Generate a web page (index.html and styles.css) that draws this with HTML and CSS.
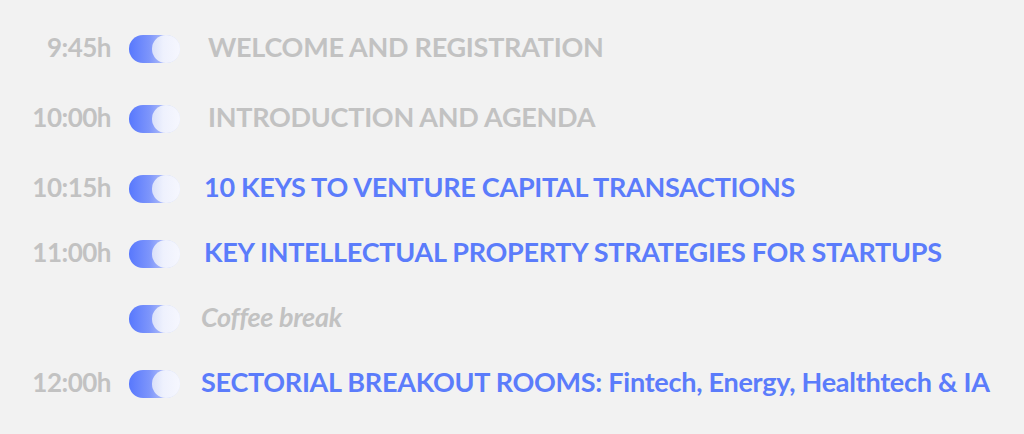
FILE: index.html
```html
<!DOCTYPE html>
<html>
<head>
<meta charset="utf-8">
<link rel="stylesheet" href="styles.css">
</head>
<body>
<div class="agenda">
  <div class="row row-a">
    <div class="time">9:45h</div>
    <div class="toggle"><span class="knob"></span></div>
    <div class="title muted gap-l">WELCOME AND REGISTRATION</div>
  </div>
  <div class="row row-a">
    <div class="time">10:00h</div>
    <div class="toggle"><span class="knob"></span></div>
    <div class="title muted gap-l">INTRODUCTION AND AGENDA</div>
  </div>
  <div class="row row-b">
    <div class="time">10:15h</div>
    <div class="toggle"><span class="knob"></span></div>
    <div class="title accent gap-m">10 KEYS TO VENTURE CAPITAL TRANSACTIONS</div>
  </div>
  <div class="row row-b">
    <div class="time">11:00h</div>
    <div class="toggle"><span class="knob"></span></div>
    <div class="title accent gap-m">KEY INTELLECTUAL PROPERTY STRATEGIES FOR STARTUPS</div>
  </div>
  <div class="row row-b">
    <div class="time"></div>
    <div class="toggle"><span class="knob"></span></div>
    <div class="title muted italic gap-s">Coffee break</div>
  </div>
  <div class="row">
    <div class="time">12:00h</div>
    <div class="toggle"><span class="knob"></span></div>
    <div class="title accent gap-s">SECTORIAL BREAKOUT ROOMS: Fintech, Energy, Healthtech &amp; IA</div>
  </div>
</div>
</body>
</html>
```
FILE: styles.css
```css
html, body {
  margin: 0;
  padding: 0;
  background: #f2f2f2;
}
body {
  width: 1024px;
  height: 434px;
  overflow: hidden;
  font-family: Lato, "Noto Sans", sans-serif;
}
.agenda {
  display: flex;
  flex-direction: column;
  padding-top: 35px;
}
.row {
  display: flex;
  align-items: center;
  height: 28px;
}
.row-a { margin-bottom: 42px; }
.row-b { margin-bottom: 37px; }
.time {
  width: 111px;
  text-align: right;
  font-weight: 700;
  font-size: 26px;
  letter-spacing: -0.5px;
  line-height: 28px;
  color: #c2c2c2;
  margin-top: -4px;
}
.toggle {
  margin-left: 18px;
  width: 51px;
  height: 28px;
  border-radius: 14px;
  background: linear-gradient(90deg, #5878fd 0%, #7d95fb 40%, #b3c1fa 70%, #dfe5fc 100%);
  display: flex;
  justify-content: flex-end;
  flex-shrink: 0;
}
.knob {
  width: 28px;
  height: 28px;
  border-radius: 50%;
  background: linear-gradient(90deg, #d9e0fa 0%, #eef1fd 40%, #f6f7fe 100%);
}
.title {
  font-weight: 700;
  font-size: 27px;
  letter-spacing: -0.27px;
  line-height: 28px;
  white-space: nowrap;
  margin-top: -4px;
}
.gap-l { margin-left: 28px; }
.gap-m { margin-left: 24px; }
.gap-s { margin-left: 21px; }
.muted { color: #c2c2c2; }
.accent { color: #5b7cfb; }
.italic { font-style: italic; }
```
